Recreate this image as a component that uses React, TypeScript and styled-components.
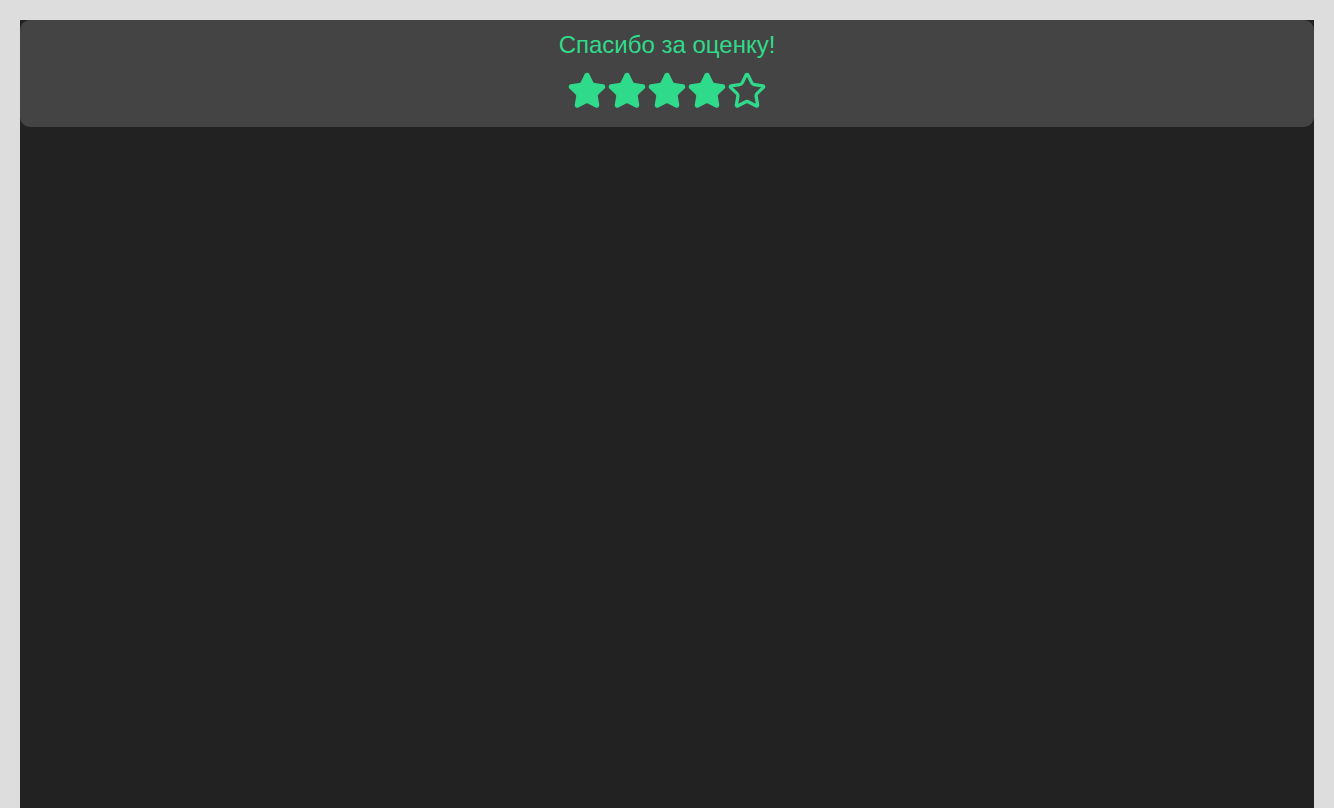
import React from 'react';
import styled, { createGlobalStyle } from 'styled-components';
import { Star } from 'lucide-react';

const GlobalStyle = createGlobalStyle`
  html, body {
    margin: 0;
    padding: 0;
    background: #dddddd;
    font-family: "Liberation Sans", Arial, sans-serif;
  }
`;

const Page = styled.div`
  padding: 20px 20px 0;
  min-height: 100vh;
  box-sizing: border-box;
  display: flex;
  flex-direction: column;
`;

const Screen = styled.div`
  flex: 1;
  background: #222222;
  display: flex;
  flex-direction: column;
`;

const RatingBar = styled.div`
  background: #444444;
  border-radius: 10px;
  height: 107px;
  box-sizing: border-box;
  padding-top: 10px;
  display: flex;
  flex-direction: column;
  align-items: center;
`;

const Title = styled.div`
  color: #2fdb8a;
  font-size: 24px;
  line-height: 30px;
`;

const Stars = styled.div`
  display: flex;
  margin-top: 11px;
`;

const StarButton = styled.button`
  background: none;
  border: none;
  padding: 0;
  width: 40px;
  height: 40px;
  color: #2fdb8a;
  cursor: pointer;
  display: flex;
  align-items: center;
  justify-content: center;
`;

const RATING = 4;

export default function App() {
  return (
    <>
      <GlobalStyle />
      <Page>
        <Screen>
          <RatingBar>
            <Title>Спасибо за оценку!</Title>
            <Stars>
              {[1, 2, 3, 4, 5].map(n => (
                <StarButton key={n}>
                  <Star size={42} strokeWidth={2} fill={n <= RATING ? 'currentColor' : 'none'} />
                </StarButton>
              ))}
            </Stars>
          </RatingBar>
        </Screen>
      </Page>
    </>
  );
}
